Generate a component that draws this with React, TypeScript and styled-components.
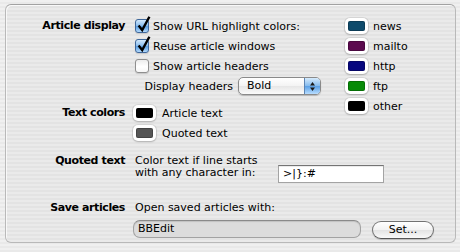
import React from 'react';
import styled, { createGlobalStyle } from 'styled-components';

const GlobalStyle = createGlobalStyle`
  html, body {
    margin: 0;
    padding: 0;
  }
  body {
    width: 460px;
    height: 252px;
    overflow: hidden;
    font-family: "DejaVu Sans", "Lucida Grande", sans-serif;
    font-size: 11px;
    color: #000;
  }
`;

const Window = styled.div`
  width: 460px;
  height: 252px;
  box-sizing: border-box;
  padding: 4px 4px 9px 5px;
  background: repeating-linear-gradient(180deg, #f0f0f0 0 2px, #e9e9e9 2px 4px);
`;

const GroupBox = styled.div`
  height: 100%;
  box-sizing: border-box;
  border: 1px solid #b9b9b9;
  border-top-color: #a2a2a2;
  border-radius: 6px;
  background: rgba(0, 0, 0, 0.025);
  box-shadow: inset 1px 1px 0 rgba(255, 255, 255, 0.7);
  padding-top: 11px;
  display: grid;
  grid-template-columns: 129px 210px 1fr;
  align-content: start;
`;

const SectionLabel = styled.div<{ $row: number; $line: number; $top?: number }>`
  grid-column: 1;
  grid-row: ${p => p.$row};
  padding-right: 10px;
  margin-top: ${p => p.$top ?? 0}px;
  text-align: right;
  font-weight: bold;
  letter-spacing: -0.4px;
  line-height: ${p => p.$line}px;
  white-space: nowrap;
`;

const Cell = styled.div<{ $row: number; $top?: number; $wide?: boolean }>`
  grid-column: ${p => (p.$wide ? '2 / 4' : '2')};
  grid-row: ${p => p.$row};
  margin-top: ${p => p.$top ?? 0}px;
  display: flex;
  flex-direction: column;
`;

const ColorColumn = styled.div`
  grid-column: 3;
  grid-row: 1 / span 2;
  display: flex;
  flex-direction: column;
`;

const Row = styled.div<{ $gap?: number; $shift?: number }>`
  height: 20px;
  display: flex;
  align-items: center;
  gap: ${p => p.$gap ?? 4}px;
  margin-left: ${p => p.$shift ?? 0}px;
  white-space: nowrap;
`;

const CheckBox = styled.span<{ $checked: boolean }>`
  position: relative;
  flex: none;
  width: 14px;
  height: 14px;
  box-sizing: border-box;
  border-radius: 3px;
  border: 1px solid ${p => (p.$checked ? '#3f679a' : '#8f8f8f')};
  background: ${p =>
    p.$checked
      ? 'linear-gradient(#d3e8fb, #8fc0ee 45%, #5c9fe2 55%, #b3d9fc)'
      : 'linear-gradient(#ececec, #ffffff 55%, #f6f6f6)'};
  box-shadow: 0 1px 1px rgba(0, 0, 0, 0.15);
`;

const CheckMark = styled.svg`
  position: absolute;
  left: 0;
  top: -4px;
  width: 15px;
  height: 17px;
  overflow: visible;
`;

const HeaderRow = styled.div`
  width: 186px;
  height: 20px;
  display: flex;
  align-items: center;
  justify-content: flex-end;
  gap: 5px;
  white-space: nowrap;
`;

const Popup = styled.div`
  flex: none;
  width: 83px;
  height: 18px;
  box-sizing: border-box;
  border: 1px solid #8a8a8a;
  border-radius: 5px;
  background: linear-gradient(#ffffff, #f3f3f3 50%, #e6e6e6 51%, #fbfbfb);
  box-shadow: 0 1px 1px rgba(0, 0, 0, 0.2);
  display: flex;
  align-items: stretch;
  overflow: hidden;
`;

const PopupText = styled.span`
  flex: 1;
  padding-left: 8px;
  line-height: 16px;
`;

const PopupArrows = styled.span`
  width: 15px;
  border-left: 1px solid #5b84b3;
  background: linear-gradient(#d6ebfd, #86bcee 48%, #5aa0e6 52%, #b8ddff);
  display: flex;
  align-items: center;
  justify-content: center;
`;

const Well = styled.span<{ $color: string }>`
  flex: none;
  width: 23px;
  height: 16px;
  box-sizing: border-box;
  padding: 3px;
  border-radius: 5px;
  background: #fff;
  box-shadow: 0 0 0 1px rgba(0, 0, 0, 0.08), 0 1px 2px rgba(0, 0, 0, 0.18);
  display: flex;
  &::after {
    content: '';
    flex: 1;
    border-radius: 2px;
    background: ${p => p.$color};
    box-shadow: inset 0 0 0 1px rgba(0, 0, 0, 0.2);
  }
`;

const QuoteRow = styled.div`
  display: flex;
  align-items: flex-start;
`;

const QuoteText = styled.div`
  width: 143px;
  line-height: 12px;
`;

const TextField = styled.div`
  margin-top: 10px;
  width: 106px;
  height: 18px;
  box-sizing: border-box;
  padding-left: 4px;
  border: 1px solid #a3a3a3;
  border-top-color: #747474;
  background: #fff;
  box-shadow: inset 0 1px 0 rgba(0, 0, 0, 0.08);
  line-height: 16px;
  white-space: pre;
`;

const Line = styled.div`
  line-height: 14px;
  white-space: nowrap;
`;

const FieldRow = styled.div`
  margin-top: 5px;
  margin-left: -2px;
  display: flex;
  align-items: flex-start;
  gap: 11px;
`;

const PathField = styled.div`
  width: 228px;
  height: 18px;
  box-sizing: border-box;
  padding-left: 4px;
  border: 1px solid #a2a2a2;
  border-top-color: #8a8a8a;
  border-radius: 7px;
  background: #dcdcdc;
  box-shadow: inset 0 1px 1px rgba(0, 0, 0, 0.12);
  line-height: 16px;
`;

const PushButton = styled.div`
  margin-top: 1px;
  width: 62px;
  height: 18px;
  box-sizing: border-box;
  border: 1px solid #727272;
  border-bottom-color: #555;
  border-radius: 9px;
  background: linear-gradient(#ffffff, #f2f2f2 50%, #e3e3e3 51%, #f9f9f9);
  box-shadow: 0 1px 1px rgba(0, 0, 0, 0.18);
  text-align: center;
  line-height: 16px;
`;

const Checkbox: React.FC<{ checked: boolean; label: string }> = ({ checked, label }) => (
  <Row>
    <CheckBox $checked={checked}>
      {checked && (
        <CheckMark viewBox="0 0 15 17">
          <path d="M2.6 9.6 L6.2 14 L13.4 0.8" fill="none" stroke="#000" strokeWidth="2.4" strokeLinejoin="miter" />
        </CheckMark>
      )}
    </CheckBox>
    <span>{label}</span>
  </Row>
);

const urlColors = [
  { name: 'news', color: '#0e4a6b' },
  { name: 'mailto', color: '#5c0b4f' },
  { name: 'http', color: '#07077f' },
  { name: 'ftp', color: '#078a07' },
  { name: 'other', color: '#000000' },
];

export default function App() {
  return (
    <>
      <GlobalStyle />
      <Window>
        <GroupBox>
          <SectionLabel $row={1} $line={20}>Article display</SectionLabel>
          <Cell $row={1}>
            <Checkbox checked label="Show URL highlight colors:" />
            <Checkbox checked label="Reuse article windows" />
            <Checkbox checked={false} label="Show article headers" />
            <HeaderRow>
              <span>Display headers</span>
              <Popup>
                <PopupText>Bold</PopupText>
                <PopupArrows>
                  <svg width="7" height="11" viewBox="0 0 7 11">
                    <path d="M3.5 1 L6 4.4 L1 4.4 Z" fill="#1a1a1a" />
                    <path d="M3.5 10 L6 6.6 L1 6.6 Z" fill="#1a1a1a" />
                  </svg>
                </PopupArrows>
              </Popup>
            </HeaderRow>
          </Cell>
          <ColorColumn>
            {urlColors.map(c => (
              <Row key={c.name} $gap={5}>
                <Well $color={c.color} />
                <span>{c.name}</span>
              </Row>
            ))}
          </ColorColumn>

          <SectionLabel $row={2} $line={20} $top={7}>Text colors</SectionLabel>
          <Cell $row={2} $top={7}>
            <Row $gap={6} $shift={-2}>
              <Well $color="#000000" />
              <span>Article text</span>
            </Row>
            <Row $gap={6} $shift={-2}>
              <Well $color="#555555" />
              <span>Quoted text</span>
            </Row>
          </Cell>

          <SectionLabel $row={3} $line={12} $top={12}>Quoted text</SectionLabel>
          <Cell $row={3} $top={12} $wide>
            <QuoteRow>
              <QuoteText>
                Color text if line starts
                <br />
                with any character in:
              </QuoteText>
              <TextField>{'>|}:#'}</TextField>
            </QuoteRow>
          </Cell>

          <SectionLabel $row={4} $line={14} $top={18}>Save articles</SectionLabel>
          <Cell $row={4} $top={18} $wide>
            <Line>Open saved articles with:</Line>
            <FieldRow>
              <PathField>BBEdit</PathField>
              <PushButton>Set...</PushButton>
            </FieldRow>
          </Cell>
        </GroupBox>
      </Window>
    </>
  );
}
